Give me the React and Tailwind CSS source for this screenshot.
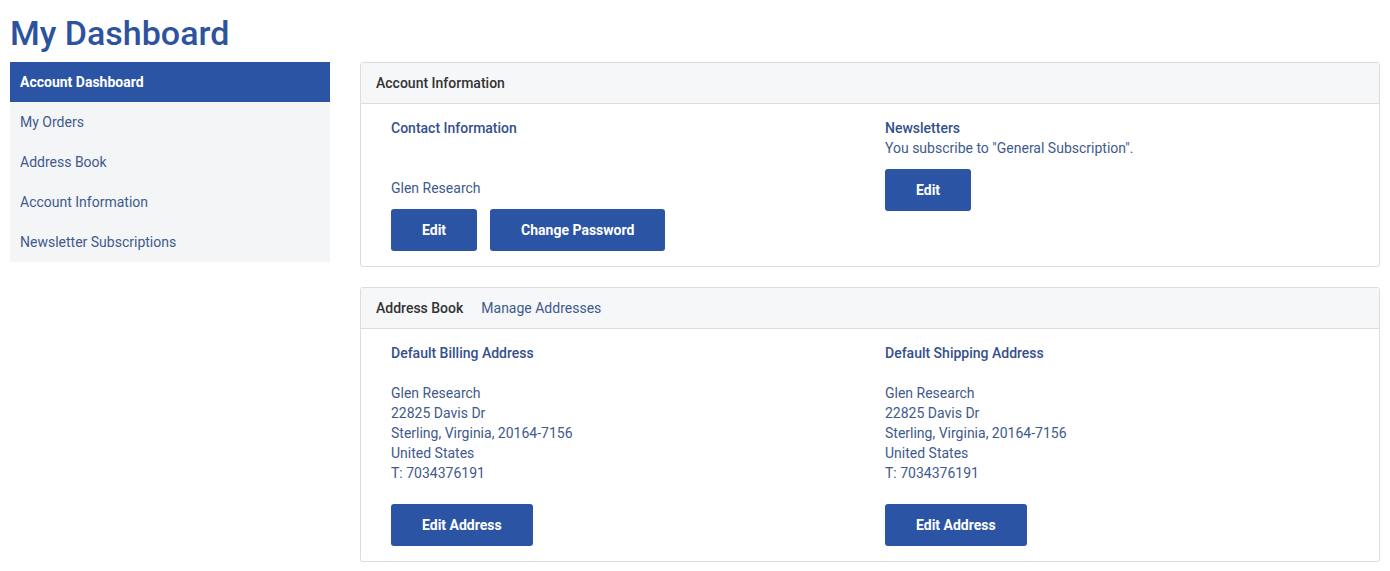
import React from "react";

const navItems = [
  "My Orders",
  "Address Book",
  "Account Information",
  "Newsletter Subscriptions",
];

function Button({ children }) {
  return (
    <button className="h-[42px] rounded-[3px] bg-[#2b54a4] px-[31px] text-[14px] font-bold text-white">
      {children}
    </button>
  );
}

function Panel({ title, extra, children }) {
  return (
    <div className="rounded-[3px] border border-[#dcdcdc] bg-white">
      <div className="flex h-[41px] items-center gap-[18px] border-b border-[#dcdcdc] bg-[#f6f7f8] px-[15px] pb-[1px] text-[14px]">
        <span className="font-medium text-[#333]">{title}</span>
        {extra && <span className="text-[#405a8c]">{extra}</span>}
      </div>
      <div className="grid grid-cols-2 px-[15px] pb-[15px] pt-[14px]">{children}</div>
    </div>
  );
}

function AddressBox({ title }) {
  return (
    <div className="px-[15px]">
      <div className="font-medium text-[#34508c]">{title}</div>
      <div className="mt-[20px]">
        <div>Glen Research</div>
        <div>22825 Davis Dr</div>
        <div>Sterling, Virginia, 20164-7156</div>
        <div>United States</div>
        <div>T: 7034376191</div>
      </div>
      <div className="mt-[21px]">
        <Button>Edit Address</Button>
      </div>
    </div>
  );
}

export default function App() {
  return (
    <div className="min-h-screen bg-white px-[10px] text-[14px] leading-[20px] text-[#405a8c] font-['Roboto',sans-serif]">
      <h1 className="pt-[12px] text-[34px] font-medium leading-[42px] text-[#2c52a0]">
        My Dashboard
      </h1>
      <div className="mt-[8px] flex gap-[30px]">
        <div className="w-[320px] shrink-0 self-start bg-[#f4f5f7]">
          <div className="flex h-[40px] items-center bg-[#2b54a4] px-[10px] pb-[1px] font-bold text-white">
            Account Dashboard
          </div>
          {navItems.map((item) => (
            <div key={item} className="flex h-[40px] items-center px-[10px] pb-[1px]">
              {item}
            </div>
          ))}
        </div>

        <div className="flex flex-1 flex-col gap-[20px]">
          <Panel title="Account Information">
            <div className="px-[15px]">
              <div className="font-medium text-[#34508c]">Contact Information</div>
              <div className="mt-[40px]">Glen Research</div>
              <div className="mt-[11px] flex gap-[13px]">
                <Button>Edit</Button>
                <Button>Change Password</Button>
              </div>
            </div>
            <div className="px-[15px]">
              <div className="font-medium text-[#34508c]">Newsletters</div>
              <div>You subscribe to "General Subscription".</div>
              <div className="mt-[11px]">
                <Button>Edit</Button>
              </div>
            </div>
          </Panel>

          <Panel title="Address Book" extra="Manage Addresses">
            <AddressBox title="Default Billing Address" />
            <AddressBox title="Default Shipping Address" />
          </Panel>
        </div>
      </div>
    </div>
  );
}
